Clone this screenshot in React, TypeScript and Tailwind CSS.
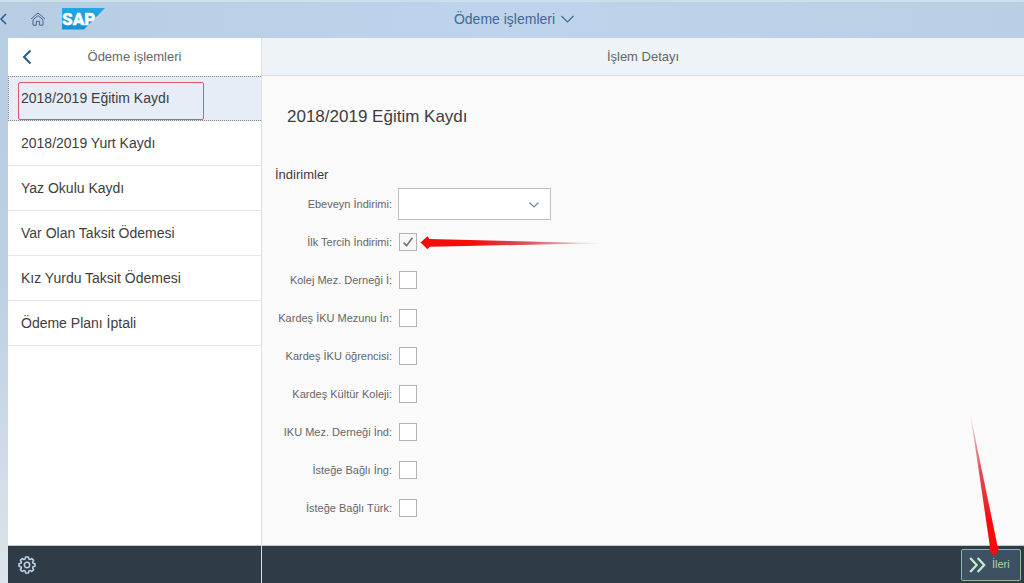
import React, { useState } from 'react';
import { clsx } from 'clsx';

const menuItems = [
  '2018/2019 Eğitim Kaydı',
  '2018/2019 Yurt Kaydı',
  'Yaz Okulu Kaydı',
  'Var Olan Taksit Ödemesi',
  'Kız Yurdu Taksit Ödemesi',
  'Ödeme Planı İptali',
];

const discounts = [
  { id: 'ilk-tercih', label: 'İlk Tercih İndirimi:', checked: true },
  { id: 'kolej-mez', label: 'Kolej Mez. Derneği İ:' },
  { id: 'kardes-mezun', label: 'Kardeş İKU Mezunu İn:' },
  { id: 'kardes-ogrenci', label: 'Kardeş İKU öğrencisi:' },
  { id: 'kardes-kolej', label: 'Kardeş Kültür Koleji:' },
  { id: 'iku-mez', label: 'IKU Mez. Derneği İnd:' },
  { id: 'istege-ing', label: 'İsteğe Bağlı İng:' },
  { id: 'istege-turk', label: 'İsteğe Bağlı Türk:' },
];

function SapLogo() {
  return (
    <svg width="43" height="22" viewBox="0 0 43 22" role="img" aria-label="SAP">
      <defs>
        <linearGradient id="sap-blue" x1="0" y1="0" x2="0" y2="1">
          <stop offset="0" stopColor="#22a9e3" />
          <stop offset="1" stopColor="#1791d4" />
        </linearGradient>
      </defs>
      <path d="M0 0H43L22 21.5H0Z" fill="url(#sap-blue)" />
      <text x="0" y="17" fill="#fff" stroke="#fff" strokeWidth="0.4" fontFamily="Roboto, sans-serif" fontWeight="900" fontSize="17">SAP</text>
    </svg>
  );
}

function HomeIcon() {
  return (
    <svg width="16" height="14" viewBox="0 0 16 14" fill="none" stroke="#47698c" strokeWidth="1">
      <path d="M1 7 8 1l7 6" />
      <path d="M3 7.8 8 3.6l5 4.2v5.4H9.6V9.3H6.4v3.9H3z" />
    </svg>
  );
}

function GearIcon() {
  return (
    <svg width="18" height="18" viewBox="0 0 20 20" fill="none" stroke="#bdd2e6" strokeWidth="1.7" strokeLinejoin="round">
      <path d="M8.4 1.2h3.2l.5 2.3 1.2.5 2-1.2 2.1 2.1-1.2 2 .5 1.2 2.2.5v2.8l-2.2.5-.5 1.2 1.2 2-2.1 2.1-2-1.2-1.2.5-.5 2.3H8.4l-.5-2.3-1.2-.5-2 1.2-2.1-2.1 1.2-2-.5-1.2-2.2-.5V8.6l2.2-.5.5-1.2-1.2-2 2.1-2.1 2 1.2 1.2-.5z" />
      <circle cx="10" cy="10" r="3" />
    </svg>
  );
}

function BackArrow({ className }: { className?: string }) {
  return (
    <svg className={className} width="10" height="16" viewBox="0 0 10 16" fill="none" stroke="#2c5a87" strokeWidth="2">
      <path d="M8.5 1.5 2 8l6.5 6.5" />
    </svg>
  );
}

export default function App() {
  const [selected, setSelected] = useState(0);

  return (
    <div className="flex min-h-screen flex-col bg-linear-to-b from-[#b7cde3] via-[#bdd0e3] to-[#dde4ea] font-['Liberation_Sans',Arial,sans-serif] text-[#3d3d3d]">
      {/* Shell bar */}
      <header className="grid h-[38px] grid-cols-[1fr_auto_1fr] items-center border-t-2 border-[#cbdfec] bg-linear-to-r from-[#b7cde3] via-[#bed4ec] to-[#b9cfe3] pb-0.5">
        <div className="flex items-center">
          <button aria-label="Geri" className="w-[30px]">
            <svg width="7" height="12" viewBox="0 0 7 12" fill="none" stroke="#2c5a87" strokeWidth="1.5">
              <path d="M6 1 1 6l5 5" />
            </svg>
          </button>
          <button aria-label="Ana sayfa" className="mr-4"><HomeIcon /></button>
          <SapLogo />
        </div>
        <button className="flex items-center gap-1.5 pl-1 text-[14px] text-[#3f6892]">
          Ödeme işlemleri
          <svg width="13" height="8" viewBox="0 0 13 8" fill="none" stroke="currentColor" strokeWidth="1.1">
            <path d="M.5 1 6.5 7l6-6" />
          </svg>
        </button>
      </header>

      <div className="flex grow pl-2">
        {/* Master list */}
        <aside className="flex w-[254px] shrink-0 flex-col border-r border-[#dcdfe2] bg-white">
          <div className="relative flex h-[38px] items-center justify-center">
            <button aria-label="Listeye dön" className="absolute left-3.5"><BackArrow /></button>
            <h2 className="text-[13px] text-[#666]">Ödeme işlemleri</h2>
          </div>
          <ul className="grow">
            {menuItems.map((item, i) => (
              <li key={item} className="relative">
                <button
                  onClick={() => setSelected(i)}
                  className={clsx(
                    'h-[45px] w-full border-b pr-3 text-left text-[14px]',
                    i === selected
                      ? 'border-t border-l border-dotted border-[#7b828a] bg-[#e6edf6] pl-3'
                      : 'border-[#e4e6e8] pl-[13px]'
                  )}
                >
                  {item}
                </button>
                {i === 0 && (
                  <span className="pointer-events-none absolute top-1.5 left-2.5 h-[38px] w-[186px] rounded-xs border border-[#e0566c]" />
                )}
              </li>
            ))}
          </ul>
          <div className="-mr-px flex h-[38px] items-center border-t border-r border-t-[#c5c9cd] border-r-[#dcdfe2] bg-[#2f3c48] pl-2.5">
            <button aria-label="Ayarlar"><GearIcon /></button>
          </div>
        </aside>

        {/* Detail page */}
        <main className="flex grow flex-col bg-[#fafafa]">
          <div className="flex h-[38px] items-center justify-center border-b border-[#dbe0e6] bg-[#eef3f8]">
            <h2 className="text-[13px] text-[#666]">İşlem Detayı</h2>
          </div>

          <div className="grow">
            <h1 className="px-[25px] pt-[29px] text-[17px] leading-6">2018/2019 Eğitim Kaydı</h1>
            <form className="pt-9 pl-[13px]">
              <h3 className="text-[13px] leading-5">İndirimler</h3>
              <div className="flex h-[38px] items-center gap-1.5">
                <label htmlFor="ebeveyn" className="w-[117px] text-right text-[11px] whitespace-nowrap text-[#666]">
                  Ebeveyn İndirimi:
                </label>
                <div className="relative flex">
                  <select id="ebeveyn" className="h-8 w-[153px] appearance-none border border-[#bfbfbf] bg-white px-2 text-[11px]">
                    <option></option>
                  </select>
                  <svg className="pointer-events-none absolute top-3.5 right-3" width="10" height="6" viewBox="0 0 10 6" fill="none" stroke="#6787a6" strokeWidth="1.2">
                    <path d="M.5.5 5 5 9.5.5" />
                  </svg>
                </div>
              </div>
              {discounts.map((d) => (
                <div key={d.id} className="flex h-[38px] items-center gap-[7px]">
                  <label htmlFor={d.id} className="w-[117px] text-right text-[11px] whitespace-nowrap text-[#666]">
                    {d.label}
                  </label>
                  <div className="relative flex">
                    <input
                      id={d.id}
                      type="checkbox"
                      defaultChecked={d.checked}
                      className="peer size-[18px] appearance-none border border-[#b3b3b3] bg-white checked:bg-[#f7f7f7]"
                    />
                    <svg className="pointer-events-none invisible absolute top-1 left-1 peer-checked:visible" width="10" height="10" viewBox="0 0 10 10" fill="none" stroke="#777" strokeWidth="1.7">
                      <path d="M.5 5.5 3.5 8.7 9.5.8" />
                    </svg>
                    {d.checked && (
                      <svg className="pointer-events-none absolute top-[3px] left-[21px]" width="180" height="14" viewBox="0 0 180 14">
                        <defs>
                          <linearGradient id="tail-h" gradientUnits="userSpaceOnUse" x1="0" y1="0" x2="180" y2="0">
                            <stop offset="0.3" stopColor="#f60b0b" />
                            <stop offset="0.6" stopColor="#cf444a" stopOpacity="0.9" />
                            <stop offset="1" stopColor="#d89090" stopOpacity="0.3" />
                          </linearGradient>
                        </defs>
                        <path d="M.5 6.5 7.5.3 9.5 3 179 7.2 9.5 10.8 7.5 13.2Z" fill="url(#tail-h)" />
                      </svg>
                    )}
                  </div>
                </div>
              ))}
            </form>
          </div>

          <footer className="flex h-[38px] items-center justify-end border-t border-[#c5c9cd] bg-[#2f3c48] pr-[3px]">
            <button className="relative flex h-8 w-[60px] items-center gap-1.5 rounded-xs border border-[#8dbb9c] bg-[#3e5163] pl-[7px] text-[11px] text-[#a9d6ad]">
              <svg width="17" height="16" viewBox="0 0 17 16" fill="none" stroke="#c3efcf" strokeWidth="2.2">
                <path d="m1.2 1 6.5 7-6.5 7M8.7 1l6.5 7-6.5 7" />
              </svg>
              İleri
              <svg className="pointer-events-none absolute right-[19px] bottom-[23px]" width="32" height="142" viewBox="0 0 32 142">
                <defs>
                  <linearGradient id="tail-v" gradientUnits="userSpaceOnUse" x1="0" y1="0" x2="0" y2="142">
                    <stop offset="0" stopColor="#d89090" stopOpacity="0.4" />
                    <stop offset="0.4" stopColor="#dc3c44" stopOpacity="0.9" />
                    <stop offset="0.75" stopColor="#f60b0b" />
                  </linearGradient>
                </defs>
                <path d="M1.5 0 28.5 131 30 133 26 141 20 136 21 132Z" fill="url(#tail-v)" />
              </svg>
            </button>
          </footer>
        </main>
      </div>
    </div>
  );
}
